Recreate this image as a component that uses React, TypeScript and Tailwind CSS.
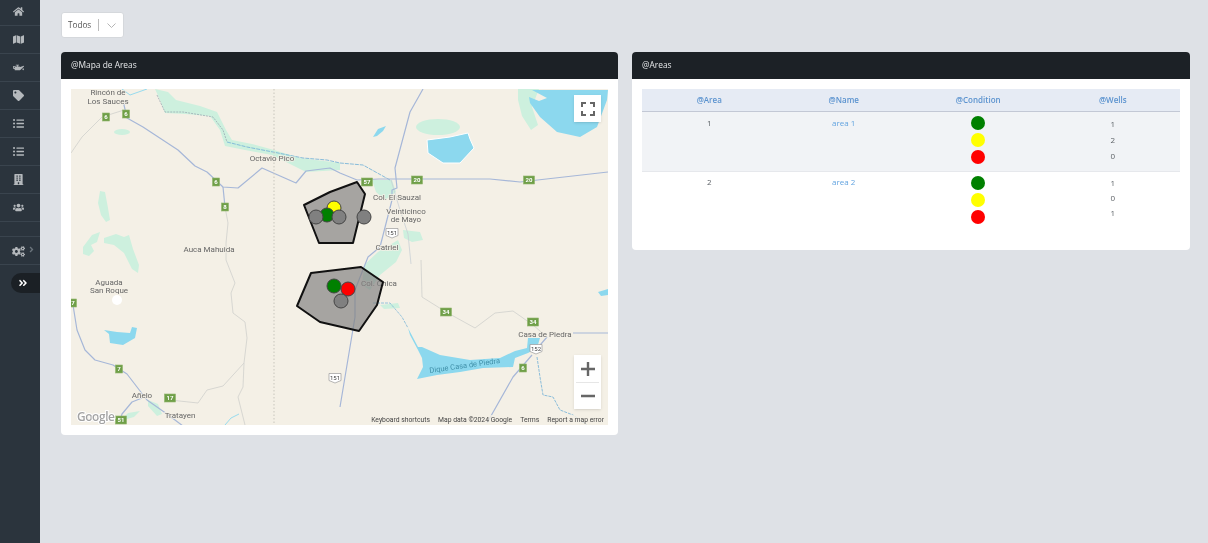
import React from "react";
import { FaHome, FaMap, FaOilCan, FaTag, FaListUl, FaBuilding, FaUsers, FaCogs, FaAngleRight, FaAngleDoubleRight } from "react-icons/fa";

const nav = [FaHome, FaMap, FaOilCan, FaTag, FaListUl, FaListUl, FaBuilding, FaUsers];

function Sidebar() {
  return (
    <aside className="w-10 shrink-0 bg-[#2b343d] flex flex-col -mt-0.5 h-[545px] text-[#b4b8bc]">
      {nav.map((Icon, i) => (
        <div key={i} className="h-7 flex items-center justify-center border-b border-[#3a444e] pr-[3px] text-[11px]">
          <Icon />
        </div>
      ))}
      <div className="h-[15px] border-b border-[#3a444e]" />
      <div className="h-7 flex items-start pt-2 pl-[12px] gap-[2px] border-b border-[#3a444e] text-[13px]">
        <FaCogs />
        <FaAngleRight className="text-[9px] text-[#6b747c]" />
      </div>
      <div className="mt-2 ml-[11px] h-5 rounded-l-full bg-[#1b2025] flex items-center pl-[7px] text-white text-[10px]">
        <FaAngleDoubleRight />
      </div>
    </aside>
  );
}

function Shield({ x, y, t }: { x: number; y: number; t: string }) {
  const w = t.length > 1 ? 11 : 7;
  return (
    <g>
      <rect x={x - w / 2} y={y - 4} width={w} height={8} fill="#6f9f48" stroke="#8fb56c" strokeWidth="0.6" />
      <text x={x} y={y + 2.2} textAnchor="middle" fontSize="6" fontWeight="700" fill="#fff">{t}</text>
    </g>
  );
}

function WhiteShield({ x, y, t }: { x: number; y: number; t: string }) {
  return (
    <g>
      <path d={`M${x - 6} ${y - 4.5}h12v7l-6 2.5l-6-2.5z`} fill="#fff" stroke="#9a9a9a" strokeWidth="0.7" />
      <text x={x} y={y + 2} textAnchor="middle" fontSize="6" fill="#444">{t}</text>
    </g>
  );
}

const labels: [number, number, string][] = [
  [108, 95, "Rincón de"],
  [108, 104, "Los Sauces"],
  [272, 161, "Octavio Pico"],
  [209, 252, "Auca Mahuida"],
  [109, 285, "Aguada"],
  [109, 293, "San Roque"],
  [397, 200, "Col. El Sauzal"],
  [406, 214, "Veinticinco"],
  [406, 222, "de Mayo"],
  [387, 250, "Catriel"],
  [379, 286, "Col. Chica"],
  [545, 337, "Casa de Piedra"],
  [142, 398, "Añelo"],
  [180, 418, "Tratayen"],
];

function MapCanvas() {
  return (
    <svg viewBox="71 89 537 336" className="w-full h-full block" style={{ fontFamily: "Roboto, sans-serif" }}>
      <rect x="71" y="89" width="537" height="336" fill="#f4f0e6" />
      {/* vegetation */}
      <g fill="#cdf0de">
        <ellipse cx="122" cy="132" rx="8" ry="3" />
        <path d="M100 191l5 1l3 16l2 12l-4 2l-5-7l-3-12z" />
        <path d="M83 247l9-12l8-3l-3 10l-6 3l3 6l-5 5l-6-2z" />
        <path d="M104 238l12-4l8 3l5-2l4 14l6 16l-1 8l-6-4l-8-16l-10-8l-10-2z" />
        <path d="M155 89L168 92L176 100L200 106L217 112L226 130L232 140L252 144L274 150L300 158L340 163L340 170L306 172L292 165L272 155L245 150L225 146L220 130L210 116L185 114L165 113L160 100Z" />
        <path d="M372 180L392 180L396 192L385 200L376 192Z" />
        <path d="M403 230L420 232L423 240L412 242L404 238Z" />
        <path d="M398 240L402 250L396 262L380 275L370 290L362 285L364 265L378 252Z" />
        <path d="M380 305L398 303L400 308L384 309Z" />
        <path d="M518 89h21l-7 18l6 18l-7 5l-9-14l-4-16z" />
        <ellipse cx="438" cy="127" rx="22" ry="8" />
        <path d="M120 421l8-8l12-2l-6 6z" />
        <path d="M148 400l10 4l4 10l-5 2l-9-10z" />
      </g>
      {/* water */}
      <g fill="#8cd8ee">
        <path d="M532 90h76l-1 10l-10 27l-17 10l-23-5l-17-15l-10-14l-1-6l10 4l8-3l-15-8z" />
        <path d="M427 140l23-3l18-4l2 6l4 9l-14 15l-17 0l-15-10z" stroke="#fff" strokeWidth="1" />
        <path d="M373 137l5-8l8-3l-3 5l-6 5z" />
        <path d="M104 330l13 2l13 1l2-6l5 1l-2 10l-12 7l-13-2l-1-9z" />
        <path d="M408 328L418 347L422 347L440 355L470 360L500 358L515 351L527 348L528 338L540 338L537 348L528 353L515 358L513 367L483 368L460 372L437 375L417 379L423 367L422 358L418 350L410 335Z" />
        <path d="M598 292l10-3v6l-7 1z" />
      </g>
      <g fill="none" stroke="#8cd8ee" strokeWidth="0.9">
        <path d="M225 425l6-7l8-4" />
        <path d="M122 89l8 6l17-6" />
        <path d="M227 142l20 5l26 5l30 6l24 2l13 3l23 2l27 15" stroke="#7cb5d8" strokeDasharray="4 1" />
      </g>
      {/* thin grey roads and rivers */}
      <g fill="none" stroke="#d4d4cf" strokeWidth="0.9">
        <path d="M124 110l-22 7l-20 20l-11 16" />
        <path d="M225 207l3 16l-2 20l0 17l9 23l-4 10l2 20l12 9l2 16l-3 25l-1 24l-5 10l7 28" />
        <path d="M244 363l-21 23l-16 4l-9 13l-28-3" />
        <path d="M421 260l1 37l24 15l29 16l20-15l18-2l20 14l14 12" />
      </g>
      <path d="M157 95l8 17h18l30 5l10 13l4 12" fill="none" stroke="#93a0ad" strokeWidth="0.7" strokeDasharray="2 1" />
      <path d="M391 180l3 10l6 20l8 24l3 30" fill="none" stroke="#c9d0d5" strokeWidth="0.8" />
      <path d="M373 303l17 0l12 14l6 11" fill="none" stroke="#7fb7d8" strokeWidth="0.8" strokeDasharray="3 1" />
      {/* main roads */}
      <g fill="none" stroke="#a6b7d8" strokeWidth="1.2" strokeLinejoin="round">
        <path d="M124 100v5l3 13l16 9l35 23l17 16l12 6l16 15l15 1l24-20l34 15l10-12l24-3l10 5l17 7l22-1l18 0" />
        <path d="M223 187l2 20" />
        <path d="M423 89l-13 23l-15 56l2 20l-5 2l0 10l-12 47l-12 10l-13 33l0 27l-15 90" />
        <path d="M397 179h93l30 3l88-10" />
        <path d="M73 305l4 25l8 20l10 10l18 5l14 9l20 26l20 14l16 12" />
        <path d="M142 398l-10 4l-10 12l-3 10" />
        <path d="M532 355l-19 22l-26 46" />
        <path d="M573 333h35M547 337l-12 14" />
      </g>
      <path d="M537 357l3 20l3 18l10 2l7 13l13 5l14 10" fill="none" stroke="#7fb7d8" strokeWidth="0.9" strokeDasharray="3 1" />
      <path d="M274 89v336" stroke="#c8c6bd" strokeWidth="1" strokeDasharray="1.5 2" />
      {/* labels */}
      <g fontSize="8" fill="#666" textAnchor="middle" stroke="#f4f0e6" strokeWidth="1.5" paintOrder="stroke">
        {labels.map(([x, y, t]) => (
          <text key={t} x={x} y={y}>{t}</text>
        ))}
      </g>
      <text x="465" y="368" fontSize="7.5" fill="#3f8fa8" textAnchor="middle" transform="rotate(-8 465 368)">Dique Casa de Piedra</text>
      {/* shields */}
      <Shield x={106} y={117} t="6" />
      <Shield x={126} y={114} t="6" />
      <Shield x={216} y={182} t="6" />
      <Shield x={225} y={207} t="8" />
      <Shield x={367} y={182} t="57" />
      <Shield x={417} y={180} t="20" />
      <Shield x={529} y={180} t="20" />
      <Shield x={446} y={312} t="34" />
      <Shield x={533} y={322} t="34" />
      <Shield x={523} y={368} t="6" />
      <Shield x={73} y={303} t="7" />
      <Shield x={119} y={369} t="7" />
      <Shield x={170} y={398} t="17" />
      <Shield x={121} y={420} t="51" />
      <WhiteShield x={392} y={233} t="151" />
      <WhiteShield x={335} y={378} t="151" />
      <WhiteShield x={536} y={349} t="152" />
      <circle cx="117" cy="300" r="5" fill="#fff" />
      {/* polygons */}
      <g fill="#808080" fillOpacity="0.68" stroke="#111" strokeWidth="2" strokeLinejoin="round">
        <path d="M304 205L330 192L357 182L365 194L353 243L319 243Z" />
        <path d="M311 273L361 267L383 282L377 305L359 331L320 322L297 306Z" />
      </g>
      <g stroke="#444" strokeWidth="1">
        <circle cx="334" cy="208" r="7" fill="#ffff00" />
        <circle cx="327" cy="215" r="7" fill="#008000" />
        <circle cx="316" cy="217" r="7" fill="#808080" />
        <circle cx="339" cy="217" r="7" fill="#808080" />
        <circle cx="364" cy="217" r="7" fill="#808080" />
        <circle cx="334" cy="286" r="7" fill="#008000" />
        <circle cx="348" cy="289" r="7" fill="#ff0000" />
        <circle cx="341" cy="301" r="7" fill="#808080" />
      </g>
      <text x="77" y="421" fontSize="12" fontWeight="600" fill="#a3a3a3" stroke="#fff" strokeWidth="2" paintOrder="stroke" textLength="38" style={{ fontFamily: "'Open Sans', sans-serif" }}>Google</text>
    </svg>
  );
}

function MapPanel() {
  return (
    <div className="relative h-[336px] overflow-hidden">
      <MapCanvas />
      <div className="absolute top-1.5 right-[7px] w-[27px] h-[27px] bg-white flex items-center justify-center shadow-sm">
        <svg width="14" height="14" viewBox="0 0 14 14" fill="none" stroke="#666" strokeWidth="2">
          <path d="M1 5V1h4M9 1h4v4M13 9v4H9M5 13H1V9" />
        </svg>
      </div>
      <div className="absolute top-[266px] right-[7px] w-[27px] h-[54px] bg-white flex flex-col items-center shadow-sm">
        <div className="h-[27px] flex items-center justify-center">
          <svg width="14" height="14" viewBox="0 0 14 14" stroke="#666" strokeWidth="2.4"><path d="M7 0v14M0 7h14" /></svg>
        </div>
        <div className="w-[23px] h-px bg-[#e6e6e6]" />
        <div className="h-[26px] flex items-center justify-center">
          <svg width="14" height="14" viewBox="0 0 14 14" stroke="#666" strokeWidth="2.4"><path d="M0 7h14" /></svg>
        </div>
      </div>
      <div className="absolute bottom-0 right-0 h-[10px] flex items-center gap-2 bg-[#f4f0e6]/80 pl-[2px] pr-[4px] text-[6.8px] leading-none text-[#444] font-['Roboto',sans-serif]">
        <span>Keyboard shortcuts</span>
        <span>Map data ©2024 Google</span>
        <span>Terms</span>
        <span>Report a map error</span>
      </div>
    </div>
  );
}

function Panel({ title, children, className }: { title: string; children: React.ReactNode; className?: string }) {
  return (
    <section className={`bg-white rounded-sm overflow-hidden ${className ?? ""}`}>
      <h2 className="h-[27px] bg-[#1c2126] text-[#e6e8ea] text-[8.4px] font-medium leading-[26px] px-2.5">{title}</h2>
      <div className="p-2.5">{children}</div>
    </section>
  );
}

const Dot = ({ c }: { c: string }) => <span className={`block w-[14px] h-[14px] rounded-full mx-auto ${c}`} />;

const rows = [
  { id: 1, name: "area 1", wells: [1, 2, 0], bg: "bg-[#f1f3f6]", wellsGap: "gap-[3px]", pad: "pt-[5px]" },
  { id: 2, name: "area 2", wells: [1, 0, 1], bg: "bg-white", wellsGap: "gap-[2px]", pad: "pt-1" },
];

function AreasTable() {
  return (
    <table className="w-full table-fixed border-collapse text-[8px] text-center text-[#5c6166]">
      <thead>
        <tr className="h-[22px] bg-[#e6ebf4] border-b border-[#c3c8d5] text-[#5b93cf]">
          <th className="font-semibold pt-px">@Area</th>
          <th className="font-semibold pt-px">@Name</th>
          <th className="font-semibold pt-px">@Condition</th>
          <th className="font-semibold pt-px">@Wells</th>
        </tr>
      </thead>
      <tbody>
        {rows.map((r, i) => (
          <tr key={r.id} className={`h-[60px] ${r.bg} align-top ${i === 0 ? "border-b border-[#e6e8ec]" : ""}`}>
            <td className={r.pad}>{r.id}</td>
            <td className={`${r.pad} text-[#63a4e0]`}>{r.name}</td>
            <td className="pt-1">
              <div className="flex flex-col gap-[3px]">
                <Dot c="bg-[#008000]" />
                <Dot c="bg-[#ffff00]" />
                <Dot c="bg-[#ff0000]" />
              </div>
            </td>
            <td className={r.pad}>
              <div className={`flex flex-col ${r.wellsGap}`}>
                {r.wells.map((w, k) => (
                  <span key={k} className="leading-[13px]">{w}</span>
                ))}
              </div>
            </td>
          </tr>
        ))}
      </tbody>
    </table>
  );
}

export default function App() {
  return (
    <div className="flex h-[543px] overflow-hidden bg-[#dee1e6] font-['Open_Sans',sans-serif] blur-[0.3px]">
      <Sidebar />
      <main className="flex-1 pl-[21px] pt-3">
        <div className="w-[63px] h-[26px] bg-white border border-[#d5d8dc] rounded-[3px] flex items-center pl-1.5 text-[8.2px] text-[#555]">
          <span>Todos</span>
          <span className="w-px h-3 bg-[#bbb] ml-[7px]" />
          <svg width="9" height="5" viewBox="0 0 9 5" fill="none" stroke="#b5b5b5" className="ml-[8px] mt-px"><path d="M.5.5l4 4l4-4" /></svg>
        </div>
        <div className="mt-3.5 grid grid-cols-[557px_558px] gap-[14px] items-start">
          <Panel title="@Mapa de Areas"><MapPanel /></Panel>
          <Panel title="@Areas" className="h-[198px]"><AreasTable /></Panel>
        </div>
      </main>
    </div>
  );
}
